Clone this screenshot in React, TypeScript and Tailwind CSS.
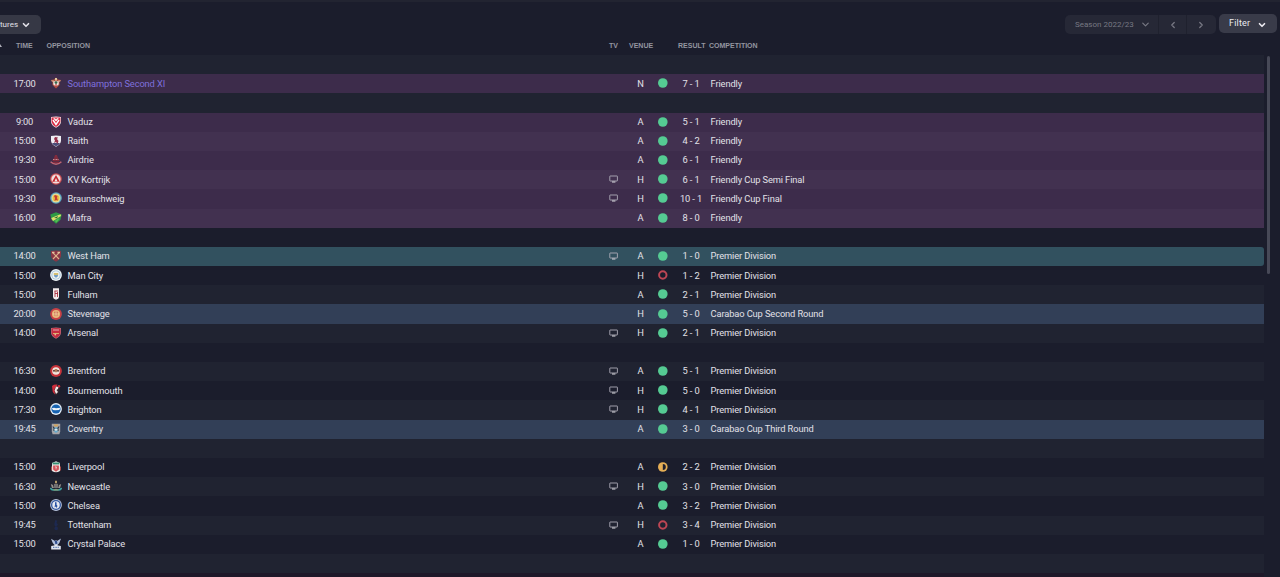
import type { ReactNode } from "react";
import { ChevronDown, ChevronLeft, ChevronRight } from "lucide-react";

type Result = "win" | "loss" | "draw";
type Kind = "friendly" | "selected" | "cup" | "league";

interface Fixture {
  time: string;
  team: string;
  venue: string;
  result: Result;
  score: string;
  competition: string;
  kind: Kind;
  tv?: boolean;
}

const f = (
  time: string,
  team: string,
  venue: string,
  score: string,
  competition: string,
  kind: Kind,
  tv = false,
  result: Result = "win",
): Fixture => ({ time, team, venue, score, competition, kind, tv, result });

// null = empty row between months
const rows: (Fixture | null)[] = [
  null,
  f("17:00", "Southampton Second XI", "N", "7 - 1", "Friendly", "friendly"),
  null,
  f("9:00", "Vaduz", "A", "5 - 1", "Friendly", "friendly"),
  f("15:00", "Raith", "A", "4 - 2", "Friendly", "friendly"),
  f("19:30", "Airdrie", "A", "6 - 1", "Friendly", "friendly"),
  f("15:00", "KV Kortrijk", "H", "6 - 1", "Friendly Cup Semi Final", "friendly", true),
  f("19:30", "Braunschweig", "H", "10 - 1", "Friendly Cup Final", "friendly", true),
  f("16:00", "Mafra", "A", "8 - 0", "Friendly", "friendly"),
  null,
  f("14:00", "West Ham", "A", "1 - 0", "Premier Division", "selected", true),
  f("15:00", "Man City", "H", "1 - 2", "Premier Division", "league", false, "loss"),
  f("15:00", "Fulham", "A", "2 - 1", "Premier Division", "league"),
  f("20:00", "Stevenage", "H", "5 - 0", "Carabao Cup Second Round", "cup"),
  f("14:00", "Arsenal", "H", "2 - 1", "Premier Division", "league", true),
  null,
  f("16:30", "Brentford", "A", "5 - 1", "Premier Division", "league", true),
  f("14:00", "Bournemouth", "H", "5 - 0", "Premier Division", "league", true),
  f("17:30", "Brighton", "H", "4 - 1", "Premier Division", "league", true),
  f("19:45", "Coventry", "A", "3 - 0", "Carabao Cup Third Round", "cup"),
  null,
  f("15:00", "Liverpool", "A", "2 - 2", "Premier Division", "league", false, "draw"),
  f("16:30", "Newcastle", "H", "3 - 0", "Premier Division", "league", true),
  f("15:00", "Chelsea", "A", "3 - 2", "Premier Division", "league"),
  f("19:45", "Tottenham", "H", "3 - 4", "Premier Division", "league", true, "loss"),
  f("15:00", "Crystal Palace", "A", "1 - 0", "Premier Division", "league"),
  null,
];

const SHIELD = "M1 1 Q6 0 11 1 V6 Q10.5 9.5 6 11.7 Q1.5 9.5 1 6Z";

// Club crests, drawn on a 12x12 grid
const crests: Record<string, ReactNode> = {
  "Southampton Second XI": (
    <>
      <path d="M1 3 L4 2.5 L6 .5 L8 2.5 L11 3 L9.5 5 V8 L6 11.5 L2.5 8 V5Z" fill="#b0503f" />
      <path d="M.8 3.6L3.5 3L4 4.5L2.3 5Z M11.2 3.6L8.5 3L8 4.5L9.7 5Z" fill="#c98f74" />
      <path d="M3.3 4.2H8.7V7.5L6 9.6L3.3 7.5Z" fill="#efe7e0" />
      <path d="M5 1H7V3.5H5Z" fill="#e2c9a0" />
      <circle cx="6" cy="5.6" r="1.4" fill="#35664b" />
      <path d="M5.4 7H6.6V10H5.4Z" fill="#b8373d" />
    </>
  ),
  Vaduz: (
    <>
      <path d={SHIELD} fill="#f4e9ec" />
      <path d="M1.6 1.6H10.4V6Q9.8 9 6 11Q2.2 9 1.6 6Z" fill="#d92c45" />
      <path d="M3 4L6 8.5L9 4" stroke="#fff" strokeWidth="1.4" fill="none" />
      <path d="M3.2 2.2H5L6 3.5L7 2.2H8.8L6 5.5Z" fill="#fff" />
    </>
  ),
  Raith: (
    <>
      <path d={SHIELD} fill="#efedf3" />
      <path d="M2 8H10L8.5 10L6 11.2L3.5 10Z" fill="#4a4c79" />
      <path d="M5 2L8 2.5L7 4L8.5 6L7.5 9L6 7L4 8L5 5.5L4 4Z" fill="#97304b" />
    </>
  ),
  Airdrie: (
    <>
      <path d="M5 1H7L8 4L10 7H2L4 4Z" fill="#812b3d" />
      <path d="M3 5.5H9" stroke="#c58d93" strokeWidth="1" strokeDasharray="1 .5" />
      <path d="M.6 7.8Q6 12.8 11.4 7.8" stroke="#c06673" strokeWidth="1.5" fill="none" />
      <path d="M3 8.2H9" stroke="#8e2b3b" strokeWidth="1.3" />
    </>
  ),
  "KV Kortrijk": (
    <>
      <circle cx="6" cy="6" r="5.8" fill="#cf5154" />
      <circle cx="6" cy="6" r="4.6" fill="#f0dede" />
      <path d="M6 2L9.8 8.7H2.2Z" fill="#c5282f" />
      <path d="M6 5L7.5 8.5H4.5Z" fill="#f4e8e8" />
    </>
  ),
  Braunschweig: (
    <>
      <circle cx="6" cy="6" r="5.8" fill="#5ba7c4" />
      <circle cx="6" cy="6" r="4.5" fill="#e8dc94" />
      <circle cx="6" cy="6" r="3.3" fill="#e8c044" />
      <path d="M5 3L7.5 4L7 6L8 8.5L6 8L4.5 9L5 6L4 4Z" fill="#c63b32" />
    </>
  ),
  Mafra: (
    <>
      <path d="M.3 2.5L6 .3L11.7 2.5L10.5 7.8L6 11.8L1.5 7.8Z" fill="#2d9a45" />
      <path d="M1.2 6L10.5 2.3L11 4L3 9Z" fill="#dfe06a" />
      <path d="M4 6L8 4L7 6.2Z" fill="#246b39" />
      <path d="M5 8.5L9.5 6L8 9L6 10.8Z" fill="#54bd55" />
    </>
  ),
  "West Ham": (
    <>
      <path d={SHIELD} fill="#8a3644" />
      <path d="M3 2.8L9 9M9 2.8L3 9" stroke="#dcb48c" strokeWidth="1.1" />
      <path d="M2 2.5H4.5M7.5 2.5H10" stroke="#e1c4a1" strokeWidth="1.3" />
    </>
  ),
  "Man City": (
    <>
      <circle cx="6" cy="6" r="5.9" fill="#eef3f6" />
      <circle cx="6" cy="6" r="4.6" fill="#9dbfd9" />
      <circle cx="6" cy="6" r="3.7" fill="#f1f3f0" />
      <path d="M3.8 4H8.2V6H3.8Z" fill="#d4bd70" />
      <path d="M3.8 6H8.2Q8 8.3 6 8.8Q4 8.3 3.8 6Z" fill="#6f9cc5" />
    </>
  ),
  Fulham: (
    <>
      <path d="M3 .3H9V9Q9 11 6 11.8Q3 11 3 9Z" fill="#f3eded" />
      <path d="M4.5 3H8M5 3V9M5 5.5H8M7.5 4V9" stroke="#a92f40" strokeWidth=".9" fill="none" />
    </>
  ),
  Stevenage: (
    <>
      <circle cx="6" cy="6" r="5.9" fill="#c94145" />
      <circle cx="6" cy="6" r="4" fill="#e6b879" />
      <path d="M4 4L6 3L8 4V7L6 9L4 7Z" fill="#d37a5c" />
      <path d="M3 6H9M6 3V9" stroke="#f3d5a2" strokeWidth=".8" />
    </>
  ),
  Arsenal: (
    <>
      <path d={SHIELD} fill="#b9707f" />
      <path d="M1.6 1.5Q6 .7 10.4 1.5V6Q10 9 6 11.1Q2 9 1.6 6Z" fill="#c62d40" />
      <path d="M3 3H9" stroke="#e9ccd0" strokeWidth=".8" />
      <path d="M3 6H9V7H3Z" fill="#dcb06b" />
      <circle cx="5.3" cy="7.6" r=".9" fill="#eab9a0" />
    </>
  ),
  Brentford: (
    <>
      <circle cx="6" cy="6" r="5.9" fill="#c7333a" />
      <circle cx="6" cy="6" r="3.8" fill="#f0e3dc" />
      <path d="M3 5H9V6.6H3Z" fill="#6a4a42" />
      <path d="M4.5 4H7.5L6 8Z" fill="#b9805a" />
    </>
  ),
  Bournemouth: (
    <>
      <path d="M2 1.5Q6 -.3 10 1.5L9.5 7Q9 9.5 6 11.7Q3 9.5 2.5 7Z" fill="#30242c" />
      <path d="M2 2Q4 .3 7.5 .7L4.5 5L5 10.5L2.8 8Z" fill="#cf2c3b" />
      <path d="M6 2.5L8.5 3L8 5L6.5 6L8 8L6 10L4.6 6.5Z" fill="#efe8e6" />
      <circle cx="9" cy="2.2" r="1.2" fill="#cf2c3b" />
    </>
  ),
  Brighton: (
    <>
      <circle cx="6" cy="6" r="5.9" fill="#e4eff8" />
      <circle cx="6" cy="6" r="4.6" fill="#1763b1" />
      <path d="M1.8 5.3L4 4.7L6 5.2L10.3 4.8L9.3 7.1L5 7.3L3 7Z" fill="#eef4f9" />
    </>
  ),
  Coventry: (
    <>
      <path d="M1.8 .8H10.2V8.5L9.4 11.2H2.6L1.8 8.5Z" fill="#a5a4a8" />
      <path d="M3.5 1.5H8.5L7.5 3.5H4.5Z" fill="#d1a35b" />
      <path d="M3.5 4.5H8.5V8L6 10L3.5 8Z" fill="#67a9cb" />
      <path d="M2.8 3.5L4 5V8M9.2 3.5L8 5V8" stroke="#34373f" strokeWidth="1.1" fill="none" />
      <path d="M4.5 6H7.5V7.6H4.5Z" fill="#e0e6e8" />
    </>
  ),
  Liverpool: (
    <>
      <path d="M2 2L6 .3L10 2V10Q6 12.5 2 10Z" fill="#ebe8e7" />
      <path d="M2.6 1.5H9.4V3.4H2.6Z" fill="#348f73" />
      <path d="M3.1 4.5H8.9V8.5L6 10.8L3.1 8.5Z" fill="#d4545b" />
      <path d="M5.3 5L6.8 6L6 9Z" fill="#f3e1df" />
      <path d="M1.6 5.5V9.5M10.4 5.5V9.5" stroke="#c8584f" strokeWidth=".9" />
    </>
  ),
  Newcastle: (
    <>
      <path d="M5 .8H7V3.5H5Z" fill="#b39c69" />
      <path d="M.8 4L3 5L4 8H2Z M11.2 4L9 5L8 8H10Z" fill="#97918a" />
      <path d="M3.7 3.5H8.3V7L6 9.2L3.7 7Z" fill="#34323a" />
      <path d="M5 4V8M7 4V8" stroke="#d0cec8" strokeWidth=".8" />
      <path d="M.3 8Q2 10.8 6 9.7Q10 10.8 11.7 8" stroke="#3fa3a3" strokeWidth="1.6" fill="none" />
      <path d="M3.5 9.9H8.5" stroke="#c7aa61" strokeWidth=".8" />
    </>
  ),
  Chelsea: (
    <>
      <circle cx="6" cy="6" r="5.9" fill="#b9c5de" />
      <circle cx="6" cy="6" r="5" fill="#34599f" />
      <circle cx="6" cy="6" r="3.7" fill="#e7eaf2" />
      <path d="M5 3L7 3.7L6.3 5L7.5 7L6.5 9L5.5 7.5L4.5 8.5L5 5.5Z" fill="#2853a5" />
    </>
  ),
  Tottenham: (
    <>
      <path d="M5.3 1L7.4 1.7L6.6 3.7L8 5.5L6.5 7.5H5L4.3 5Z" fill="#1d2950" />
      <circle cx="6.2" cy="9.4" r="1.8" fill="#1d2950" />
    </>
  ),
  "Crystal Palace": (
    <>
      <path d="M1 .8L5 3L6 2L7 3L11 .6L9.3 5L7.5 7H4.5L2.8 5Z" fill="#b3c1dc" />
      <path d="M4.5 2.5L7 3L7.5 5.5L5.5 6.5Z" fill="#2f4f91" />
      <path d="M1.2 8L4 7.5L6 6.3L8 7.5L10.8 8V11.5H1.2Z" fill="#dfe4ee" />
      <path d="M3 9.3H9" stroke="#3d62a3" strokeWidth="1" strokeDasharray="1 .6" />
    </>
  ),
};

function Crest({ team }: { team: string }) {
  return (
    <svg viewBox="0 0 12 12" className="size-3 shrink-0">
      {crests[team]}
    </svg>
  );
}

function ResultDot({ result }: { result: Result }) {
  return (
    <svg viewBox="0 0 10 10" className="size-2.5">
      {result === "win" && <circle cx="4.8" cy="5" r="4.8" fill="#55cb93" />}
      {result === "loss" && (
        <circle cx="4.8" cy="5" r="3.7" fill="none" stroke="#bd4654" strokeWidth="2" />
      )}
      {result === "draw" && (
        <>
          <circle cx="4.8" cy="5" r="4.8" fill="#e5ae55" />
          <path d="M4.8 2A3 3 0 0 1 4.8 8Z" fill="#1d1e2d" />
        </>
      )}
    </svg>
  );
}

function TvIcon() {
  return (
    <svg viewBox="0 0 9 8" className="h-2 w-[9px]" fill="none">
      <rect x=".8" y="1" width="7.6" height="5" rx=".3" stroke="#aeacb8" strokeWidth=".9" />
      <path d="M3 7H6.4" stroke="#d0cfd6" strokeWidth="1.1" />
    </svg>
  );
}

function rowColor(row: Fixture | null, even: boolean) {
  if (row?.kind === "friendly") return even ? "bg-[#423150]" : "bg-[#3d2c4b]";
  if (row?.kind === "selected") return "bg-[#32515f] rounded-r-[3px]";
  if (row?.kind === "cup") return "bg-[#323f57]";
  return even ? "bg-[#202331]" : "bg-[#1b1d2c]";
}

function FixtureRow({ row, even }: { row: Fixture | null; even: boolean }) {
  return (
    <div className={`flex h-[19.19px] items-center pb-px ${rowColor(row, even)}`}>
      {row && (
        <>
          <div className="w-[49px] shrink-0 text-center tracking-[-0.2px]">{row.time}</div>
          <div className="flex w-[553px] shrink-0 items-center gap-[5.5px] pl-px">
            <Crest team={row.team} />
            <span className={row.kind === "friendly" && row.venue === "N" ? "text-[#7f70dc]" : ""}>
              {row.team}
            </span>
          </div>
          <div className="flex w-[23.5px] shrink-0 justify-center">{row.tv && <TvIcon />}</div>
          <div className="w-[30px] shrink-0 text-center">{row.venue}</div>
          <div className="flex w-[14px] shrink-0 justify-center">
            <ResultDot result={row.result} />
          </div>
          <div className="w-[41px] shrink-0 pl-0.5 text-center">{row.score}</div>
          <div>{row.competition}</div>
        </>
      )}
    </div>
  );
}

export default function App() {
  return (
    <div className="flex h-[577px] w-[1280px] flex-col overflow-hidden bg-[#1b1d2c] font-['Roboto',sans-serif] text-[9px] leading-none whitespace-nowrap text-[#e2e1e8]">
      <div className="h-0.5 shrink-0 bg-[#222431]" />

      {/* Toolbar */}
      <div className="flex h-[35px] shrink-0 items-start justify-between pt-3">
        <button className="mt-px flex h-[19px] w-[41px] items-center justify-between rounded-r-[5px] bg-[#363845] pr-2.5 text-[8px]">
          <span>tures</span>
          <ChevronDown className="size-2.5 shrink-0" strokeWidth={4} />
        </button>
        <div className="flex gap-[3px] pr-[3px]">
          <div className="mt-px flex h-[19px] overflow-hidden rounded-[5px] bg-[#262836] text-[8px] text-[#777883]">
            <div className="flex w-[94px] items-center gap-1.5 border-r border-[#1f212e] pl-2.5">
              Season 2022/23
              <ChevronDown className="size-[11px]" strokeWidth={2.6} />
            </div>
            <div className="flex w-7 items-center justify-center border-r border-[#1f212e]">
              <ChevronLeft className="size-2.5" strokeWidth={3} />
            </div>
            <div className="flex w-[29px] items-center justify-center pr-0.5">
              <ChevronRight className="size-2.5" strokeWidth={3} />
            </div>
          </div>
          <button className="flex h-[19px] w-[58px] items-center gap-[7px] rounded-[5px] bg-[#393b49] pl-2.5 text-[9px] tracking-[0.2px] text-[#ecebf1]">
            <span>Filter</span>
            <ChevronDown className="mt-0.5 size-2.5" strokeWidth={4} />
          </button>
        </div>
      </div>

      {/* Column headers */}
      <div className="flex h-[18px] shrink-0 items-start pt-[5px] font-['Liberation_Sans',sans-serif] text-[7px] font-bold text-[#9495a0]">
        <div className="w-4 pt-0.5">
          <svg viewBox="0 0 2 3" className="h-[3px] w-0.5">
            <path d="M0 0L2 3H0Z" fill="#b0b0ba" />
          </svg>
        </div>
        <div className="w-[30.5px]">TIME</div>
        <div className="w-[562.5px]">OPPOSITION</div>
        <div className="w-5">TV</div>
        <div className="w-[49px]">VENUE</div>
        <div className="w-[31px]">RESULT</div>
        <div>COMPETITION</div>
      </div>

      <div className="flex flex-1">
        <div className="w-[1263.5px] text-[9.3px] tracking-[-0.11px]">
          {rows.map((row, i) => (
            <FixtureRow key={i} row={row} even={i % 2 === 0} />
          ))}
          <div className="h-1 bg-[#1e1829]" />
        </div>
        <div className="mt-px ml-[3.5px] h-[218px] w-[3px] rounded-full bg-[#474957]" />
      </div>
    </div>
  );
}
